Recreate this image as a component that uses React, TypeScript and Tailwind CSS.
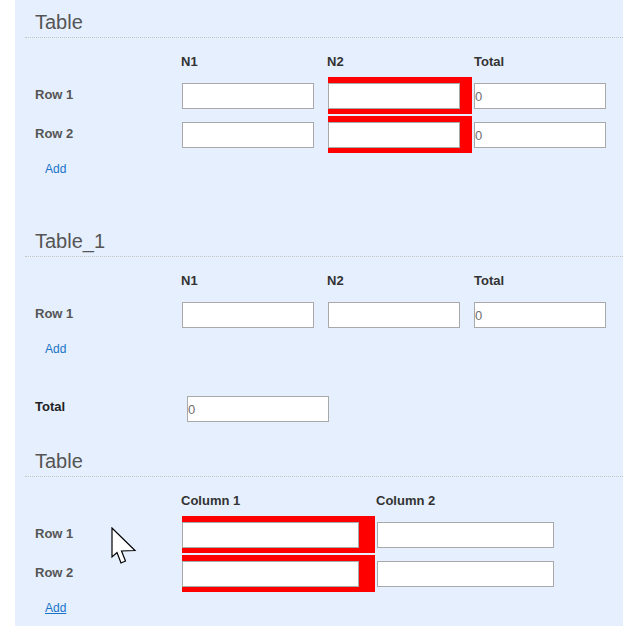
import React from 'react';

const FONT = "font-['Liberation_Sans',Arial,sans-serif]";

function Input({ value = '', width }: { value?: string; width: string }) {
  return (
    <input
      readOnly
      defaultValue={value}
      className={`${width} block h-[26px] border border-[#a9a9a9] bg-white px-0 text-[13px] text-[#6f6f6f] outline-none`}
    />
  );
}

function Cell({ red, value, pad, width }: { red?: boolean; value?: string; pad: string; width: string }) {
  return (
    <div className={`${pad} pt-[6px] pb-[5px] ${red ? 'bg-[#ff0000]' : ''}`}>
      <Input value={value} width={width} />
    </div>
  );
}

function Title({ text }: { text: string }) {
  return (
    <div className="h-[38px] border-b border-dotted border-[#c4c4c4] pl-[10px] pt-[11px] text-[20px] leading-[23px] text-[#555]">
      {text}
    </div>
  );
}

function RowLabel({ text }: { text: string }) {
  return (
    <div className="flex items-center pb-[3px] pl-[10px] text-[13px] font-bold leading-[15px] text-[#555]">{text}</div>
  );
}

function AddLink({ underline }: { underline?: boolean }) {
  return (
    <div className="mt-[9px] pl-[20px] text-[12px] leading-[14px]">
      <a className={`text-[#1a73c8] ${underline ? 'underline' : ''}`}>Add</a>
    </div>
  );
}

// N1 / N2 / Total table
function SumTable({ title, rows, redN2 }: { title: string; rows: string[]; redN2?: boolean }) {
  return (
    <div>
      <Title text={title} />
      <div className="grid h-[37px] grid-cols-[155px_144px_144px_144px] gap-x-[2px] pt-[16px] text-[13px] font-bold leading-[15px] text-[#333]">
        <div />
        <div className="-ml-px">N1</div>
        <div className="-ml-px">N2</div>
        <div>Total</div>
      </div>
      {rows.map((r) => (
        <div key={r} className="mt-[2px] grid h-[37px] grid-cols-[155px_144px_144px_144px] gap-x-[2px]">
          <RowLabel text={r} />
          <Cell pad="pr-[12px]" width="w-[132px]" />
          <Cell pad="pr-[12px]" width="w-[132px]" red={redN2} />
          <Cell pad="pr-[12px]" width="w-[132px]" value="0" />
        </div>
      ))}
      <AddLink />
    </div>
  );
}

function Cursor() {
  return (
    <svg className="absolute left-[111px] top-[527px]" width="27" height="40" viewBox="0 0 27 40">
      <path
        d="M1 1 V30 L6 25.5 L10 36 L14.5 34 L10.5 24 L24 23.5 Z"
        fill="#fff"
        stroke="#000"
        strokeWidth="1.2"
        strokeLinejoin="miter"
      />
    </svg>
  );
}

export default function App() {
  return (
    <div className={`${FONT} relative h-[626px] w-[623px] overflow-hidden bg-white`}>
      <div className="ml-[15px] h-full bg-[#e5effd] pl-[10px]">
        <div className="pb-[43px]">
          <SumTable title="Table" rows={['Row 1', 'Row 2']} redN2 />
        </div>

        <SumTable title="Table_1" rows={['Row 1']} />

        {/* grand total */}
        <div className="mb-[17px] mt-[40px] flex h-[26px]">
          <div className="mt-[3px] w-[162px] pl-[10px] text-[13px] font-bold leading-[15px] text-[#222]">Total</div>
          <Input value="0" width="w-[142px]" />
        </div>

        <div>
          <Title text="Table" />
          <div className="grid h-[37px] grid-cols-[155px_193px_193px] gap-x-[2px] pt-[16px] text-[13px] font-bold leading-[15px] text-[#333]">
            <div />
            <div className="-ml-px">Column 1</div>
            <div className="-ml-px">Column 2</div>
          </div>
          {['Row 1', 'Row 2'].map((r) => (
            <div key={r} className="mt-[2px] grid h-[37px] grid-cols-[155px_193px_193px] gap-x-[2px]">
              <RowLabel text={r} />
              <Cell pad="pr-[16px]" width="w-[177px]" red />
              <Cell pad="pr-[16px]" width="w-[177px]" />
            </div>
          ))}
          <AddLink underline />
        </div>
      </div>
      <Cursor />
    </div>
  );
}
